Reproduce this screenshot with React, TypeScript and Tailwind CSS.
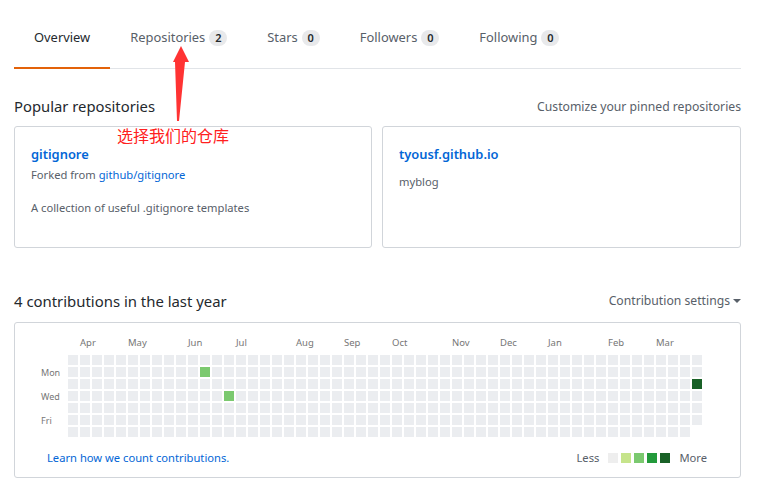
import React from "react";

const tabs = [
  { label: "Overview", count: null as number | null, active: true },
  { label: "Repositories", count: 2, active: false },
  { label: "Stars", count: 0, active: false },
  { label: "Followers", count: 0, active: false },
  { label: "Following", count: 0, active: false },
];

const months = [
  { name: "Apr", col: 1 },
  { name: "May", col: 5 },
  { name: "Jun", col: 10 },
  { name: "Jul", col: 14 },
  { name: "Aug", col: 19 },
  { name: "Sep", col: 23 },
  { name: "Oct", col: 27 },
  { name: "Nov", col: 32 },
  { name: "Dec", col: 36 },
  { name: "Jan", col: 40 },
  { name: "Feb", col: 45 },
  { name: "Mar", col: 49 },
];

// col,row -> colour for the days that have contributions
const filled: Record<string, string> = {
  "11-1": "#7bc96f",
  "13-3": "#7bc96f",
  "52-2": "#196127",
};

function ContributionGraph() {
  const cells: React.ReactNode[] = [];
  for (let c = 0; c < 53; c++) {
    const rows = c === 52 ? 6 : 7;
    for (let r = 0; r < rows; r++) {
      cells.push(
        <rect
          key={`${c}-${r}`}
          x={53 + c * 12}
          y={32 + r * 12}
          width={10}
          height={10}
          fill={filled[`${c}-${r}`] ?? "#ebedf0"}
        />
      );
    }
  }
  return (
    <svg width={725} height={120} className="block">
      {months.map((m) => (
        <text key={m.name} x={53 + m.col * 12} y={23} fontSize={9.5} fill="#767676">
          {m.name}
        </text>
      ))}
      <text x={26} y={53} fontSize={9} fill="#767676">Mon</text>
      <text x={26} y={77} fontSize={9} fill="#767676">Wed</text>
      <text x={26} y={101} fontSize={9} fill="#767676">Fri</text>
      {cells}
    </svg>
  );
}

function RepoCard({
  name,
  fork,
  desc,
}: {
  name: string;
  fork?: string;
  desc: string;
}) {
  return (
    <div className="h-[122px] rounded-[3px] border border-[#d1d5da] px-4 pt-[17px]">
      <div className="text-[12.9px] font-semibold leading-[21px] text-[#0366d6]">{name}</div>
      {fork && (
        <div className="mt-[1px] text-[11.2px] leading-[18px] text-[#586069]">
          Forked from <span className="text-[#0366d6]">{fork}</span>
        </div>
      )}
      <div
        className={
          fork
            ? "mt-[15px] text-[11.2px] leading-[18px] text-[#586069]"
            : "mt-[8px] text-[11.2px] leading-[18px] text-[#586069]"
        }
      >
        {desc}
      </div>
    </div>
  );
}

export default function App() {
  return (
    <div
      className="relative h-[494px] w-[782px] overflow-hidden bg-white text-[#24292e]"
      style={{ fontFamily: '"Segoe UI", "Noto Sans", "Noto Sans CJK SC", sans-serif' }}
    >
      <div className="mx-[14px] w-[727px]">
        <nav className="flex border-b border-[#e1e4e8]">
          {tabs.map((t) => (
            <div
              key={t.label}
              className={
                t.active
                  ? "-mb-px flex items-center border-b-2 border-[#e36209] px-5 pb-[19px] pt-[27px] text-[12.9px] leading-[21px] text-[#24292e]"
                  : "-mb-px flex items-center border-b-2 border-transparent px-5 pb-[19px] pt-[27px] text-[12.9px] leading-[21px] text-[#586069]"
              }
            >
              {t.label}
              {t.count !== null && (
                <span className="ml-[4px] inline-flex h-[16px] min-w-[18px] items-center justify-center rounded-full bg-[#e8e9eb] px-[5px] text-[11px] font-semibold leading-none text-[#24292e]">
                  {t.count}
                </span>
              )}
            </div>
          ))}
        </nav>

        <div className="mt-[25px] flex items-end justify-between">
          <h2 className="text-[14.8px] leading-[24px] text-[#24292e]">Popular repositories</h2>
          <span className="pb-[1px] text-[12.2px] leading-[20px] text-[#586069]">
            Customize your pinned repositories
          </span>
        </div>

        <div className="mt-[8px] grid grid-cols-[358px_359px] gap-[10px]">
          <RepoCard
            name="gitignore"
            fork="github/gitignore"
            desc="A collection of useful .gitignore templates"
          />
          <RepoCard name="tyousf.github.io" desc="myblog" />
        </div>

        <div className="mt-[41px] flex items-center justify-between">
          <h2 className="text-[14.9px] leading-[24px] text-[#24292e]">
            4 contributions in the last year
          </h2>
          <span className="flex items-center text-[12.2px] leading-[20px] text-[#586069]">
            Contribution settings
            <svg width={8} height={4} viewBox="0 0 8 4" className="ml-[3px]">
              <path d="M0 0h8L4 4z" fill="#586069" />
            </svg>
          </span>
        </div>

        <div className="mt-[9px] rounded-[3px] border border-[#d1d5da] pb-[10px]">
          <ContributionGraph />
          <div className="mt-[6px] flex h-[18px] items-center justify-between pl-[32px] pr-[33px] text-[11.2px] leading-[18px]">
            <span className="text-[#0366d6]">Learn how we count contributions.</span>
            <div className="flex items-center text-[#586069]">
              <span className="mr-[9px]">Less</span>
              <div className="flex gap-[3px]">
                <span className="h-[10px] w-[10px] bg-[#eeeeee]" />
                <span className="h-[10px] w-[10px] bg-[#c6e48b]" />
                <span className="h-[10px] w-[10px] bg-[#7bc96f]" />
                <span className="h-[10px] w-[10px] bg-[#239a3b]" />
                <span className="h-[10px] w-[10px] bg-[#196127]" />
              </div>
              <span className="ml-[9px]">More</span>
            </div>
          </div>
        </div>
      </div>

      {/* red annotation drawn on top of the screenshot */}
      <svg width={782} height={494} className="pointer-events-none absolute left-0 top-0">
        <polygon points="181,46 189,62 185,62 179,121 177,121 175,62 173,62" fill="#ff3333" />
      </svg>
      <div
        className="absolute left-[117px] top-[125px] text-[16px] leading-[20px] text-[#ff2020]"
        style={{ fontFamily: '"Noto Sans CJK SC", sans-serif' }}
      >
        选择我们的仓库
      </div>
    </div>
  );
}
